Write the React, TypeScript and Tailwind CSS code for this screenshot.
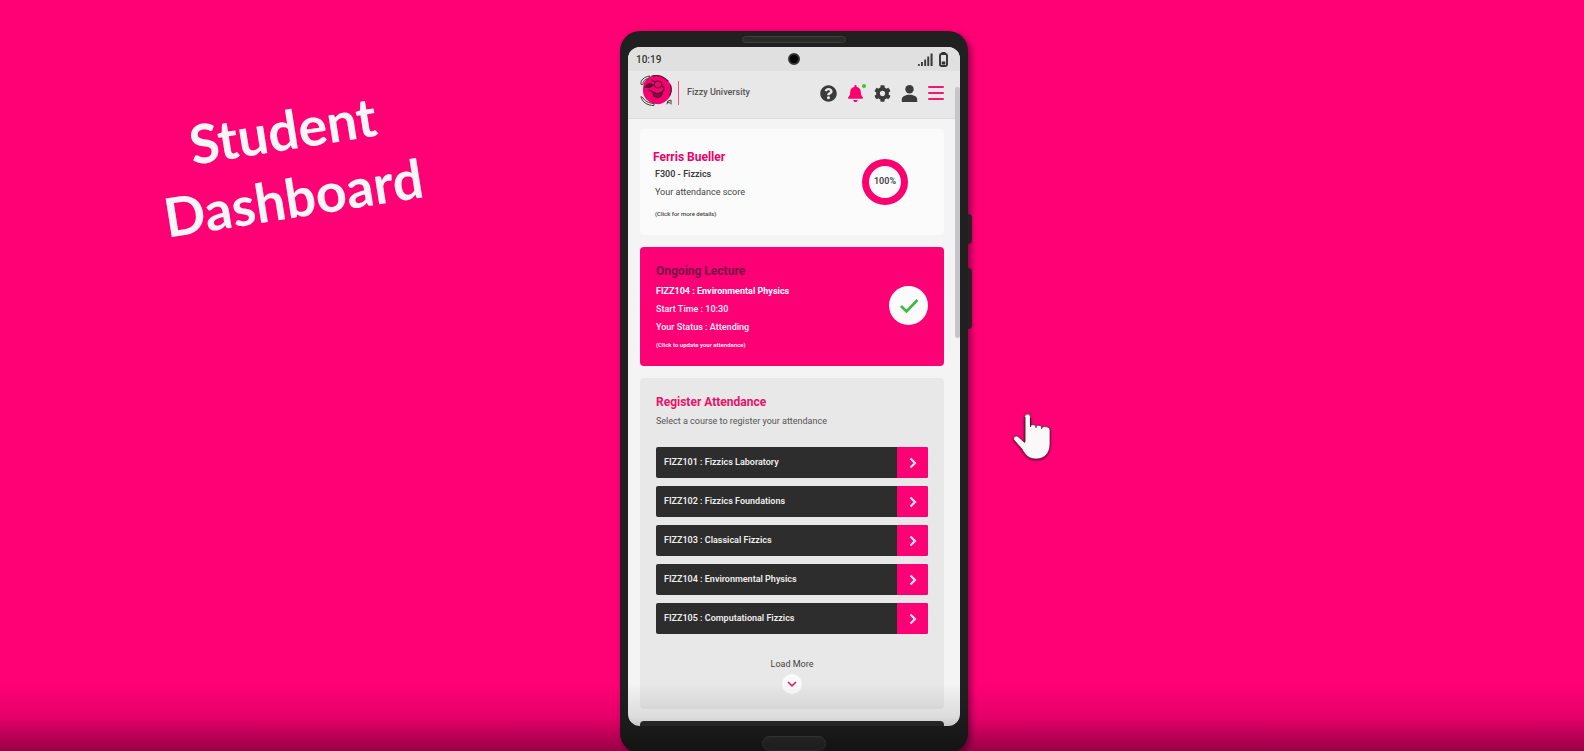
import React from "react";
import { FaBell, FaCog, FaQuestionCircle } from "react-icons/fa";

const courses = [
  "FIZZ101 : Fizzics Laboratory",
  "FIZZ102 : Fizzics Foundations",
  "FIZZ103 : Classical Fizzics",
  "FIZZ104 : Environmental Physics",
  "FIZZ105 : Computational Fizzics",
];

function Logo() {
  return (
    <svg viewBox="0 0 32 32" className="h-8 w-8" fill="none" aria-label="Fizzy University">
      <path d="M8 3C14-1 22 0 27 5c5 4 5 9 4 14-2 6-8 11-15 10C8 28 3 22 3 16 3 10 4 6 8 3Z" fill="#f5006f" />
      <g stroke="#5a1034" strokeWidth="1.200" strokeLinecap="round">
        <path d="M12 1c6-1.500 12 1 16 5M30.500 10c1 3 1 7-.500 10" />
        <ellipse cx="18" cy="9.500" rx="3.800" ry="3.300" />
        <path d="M5 12c2-3 5-4 8-2l-3 2.500Z" fill="#5a1034" />
        <path d="M13 17c3 2 7 2 10-1-1 5-3 7-7 6-2 0-3-2-3-5Z" fill="#8c0a48" />
        <path d="M22.500 11c1 1 2 3 1 5M9 15l4 2M12 5l3 2" />
      </g>
      <g stroke="#3c3c3c" strokeWidth="1" strokeLinecap="round" strokeLinejoin="round">
        <path d="M1 9C0 5 4 2 10 1L8.500 3.500C5 4 3 6 3 9Z" fill="#e8e8e9" />
        <path d="M1 22c1 5 6 8.500 13 8.500l0-2C8 28 5 26 3 23Z" fill="#e8e8e9" />
        <path d="M27 29l1-3 3-1v4M27.500 27l2.500 1" />
      </g>
    </svg>
  );
}

function StatusBar() {
  return (
    <div className="relative flex h-6 items-center justify-between bg-[#e0e0e1] pr-3 pl-2">
      <span className="text-[10px] font-medium text-[#333]">10:19</span>
      <span className="absolute top-1.5 left-1/2 h-3 w-3 -translate-x-1/2 rounded-full border-2 border-[#333] bg-black" />
      <div className="flex items-center gap-1.5">
        <svg viewBox="0 0 15 13" className="h-[13px] w-[15px]" fill="#3a3a3a" aria-hidden="true">
          <rect x="0" y="11" width="1.700" height="2" />
          <rect x="3" y="9" width="1.900" height="4" />
          <rect x="6.200" y="6.500" width="1.900" height="6.500" />
          <rect x="9.300" y="3.500" width="1.900" height="9.500" />
          <rect x="12.500" y="0.500" width="2.100" height="12.500" />
        </svg>
        <svg viewBox="0 0 9 15" className="h-[15px] w-[9px]" fill="none" aria-hidden="true">
          <rect x="1" y="2" width="7" height="12" rx="1.500" stroke="#333" strokeWidth="1.900" />
          <rect x="2.500" y="0" width="4" height="2" fill="#333" />
          <rect x="2.700" y="9.500" width="3.600" height="3" fill="#333" />
        </svg>
      </div>
    </div>
  );
}

function Header() {
  return (
    <header className="flex h-12 items-start justify-between border-b border-[#dcdcdc] bg-[#e8e8e9] pt-1 pr-4 pl-3">
      <div className="flex items-start">
        <Logo />
        <div className="flex h-9 items-center">
          <span className="ml-1.5 h-6 w-px bg-[#f0528f]" />
          <span className="ml-2 text-[9px] font-medium text-[#555]">Fizzy University</span>
        </div>
      </div>
      <nav className="flex h-9 items-center gap-[10px] text-[#3b3b3b]">
        <button aria-label="Help"><FaQuestionCircle size={17} /></button>
        <button aria-label="Notifications" className="relative text-[#fc0070]">
          <FaBell size={17} />
          <span className="absolute -top-px -right-0.5 h-1 w-1 rounded-full bg-[#35c435]" />
        </button>
        <button aria-label="Settings"><FaCog size={17} /></button>
        <button aria-label="Profile">
          <svg viewBox="0 0 17 17" className="h-[17px] w-[17px]" fill="currentColor" aria-hidden="true">
            <circle cx="8.500" cy="4.300" r="4.200" />
            <path d="M0.800 17v-2.500c0-3.200 4-4.700 7.700-4.700s7.700 1.500 7.700 4.700V17Z" />
          </svg>
        </button>
        <button aria-label="Menu" className="flex w-4 flex-col gap-1">
          <span className="h-0.5 rounded-full bg-[#f21871]" />
          <span className="h-0.5 rounded-full bg-[#f21871]" />
          <span className="h-0.5 rounded-full bg-[#f21871]" />
        </button>
      </nav>
    </header>
  );
}

function ScoreCard() {
  return (
    <section className="flex items-start justify-between rounded-sm bg-[#fbfbfb] pt-5 pr-9 pb-3 pl-[13px]">
      <div className="text-[9px] leading-[18px] text-[#444]">
        <h2 className="text-[12px] leading-4 font-bold text-[#ec0069]">Ferris Bueller</h2>
        <div className="pl-0.5">
          <p className="font-semibold text-[#3c3c3c]">F300 - Fizzics</p>
          <p>Your attendance score</p>
          <p className="mt-1 text-[6px] font-medium">(Click for more details)</p>
        </div>
      </div>
      <div className="mt-2.5 flex h-[46px] w-[46px] items-center justify-center rounded-full border-[7px] border-[#fc0070] text-[9px] font-semibold text-[#444]">
        100%
      </div>
    </section>
  );
}

function LectureCard() {
  return (
    <section className="flex items-start justify-between rounded-sm bg-[#fe0075] px-4 pt-[15px] pb-3">
      <div className="text-[9px] leading-[18px] font-semibold text-[#ffe6f1]">
        <h2 className="mb-0.5 text-[12px] font-bold text-[#721545]">Ongoing Lecture</h2>
        <p className="font-bold text-white">FIZZ104 : Environmental Physics</p>
        <p>Start Time : 10:30</p>
        <p>Your Status : Attending</p>
        <p className="text-[6px] font-bold">(Click to update your attendance)</p>
      </div>
      <button aria-label="Attending" className="mt-6 flex h-[39px] w-[39px] items-center justify-center rounded-full bg-[#fbfbfb]">
        <svg viewBox="0 0 20 16" className="h-4 w-5" fill="none" stroke="#3cba3c" strokeWidth="2.600" aria-hidden="true">
          <path d="M2 8l5.500 5.500L18.500 2" />
        </svg>
      </button>
    </section>
  );
}

function RegisterCard() {
  return (
    <section className="rounded-sm bg-[#e8e8e8] px-4 py-[15px]">
      <h2 className="text-[12px] leading-[18px] font-bold text-[#ec1068]">Register Attendance</h2>
      <p className="text-[9px] leading-5 text-[#555]">Select a course to register your attendance</p>
      <ul className="mt-4 flex flex-col gap-2">
        {courses.map((course) => (
          <li key={course}>
            <button className="flex h-[31px] w-full items-stretch overflow-hidden rounded-xs bg-[#2d2d2e] text-left">
              <span className="flex-1 self-center pl-2 text-[9px] font-semibold text-[#ededed]">{course}</span>
              <span className="flex w-[31px] items-center justify-center bg-[#fe0075]">
                <svg viewBox="0 0 8 12" className="h-3 w-2" fill="none" stroke="#ffe3ef" strokeWidth="2.200" aria-hidden="true">
                  <path d="M1.500 1.500L6 6l-4.500 4.500" />
                </svg>
              </span>
            </button>
          </li>
        ))}
      </ul>
      <button className="mx-auto mt-5 flex flex-col items-center text-[9px] leading-5 text-[#444]">
        Load More
        <span className="flex h-5 w-5 items-center justify-center rounded-full bg-[#fafafa]">
          <svg viewBox="0 0 10 6" className="h-1.5 w-[10px]" fill="none" stroke="#e01a64" strokeWidth="1.600" aria-hidden="true">
            <path d="M1 1l4 3.800L9 1" />
          </svg>
        </span>
      </button>
    </section>
  );
}

function Phone() {
  return (
    <div className="relative h-[722px] rounded-[20px] bg-[#1f201f] px-2 pt-[5px] shadow-[3px_3px_6px_rgba(60,0,30,0.55)]">
      <span className="absolute top-[183px] -right-1 h-[30px] w-1 rounded-r-sm bg-[#2a2025]" />
      <span className="absolute top-[237px] -right-1 h-[61px] w-1 rounded-r-sm bg-[#2a2025]" />
      <div className="mx-auto h-[7px] w-[104px] rounded-full border border-[#3d3d3c] bg-[#2b2b2a]" />
      <div className="relative mt-1 h-[679px] overflow-hidden rounded-xl bg-[#f4f4f4]">
        <StatusBar />
        <Header />
        <main className="flex flex-col gap-3 pt-[10px] pr-4 pl-3">
          <ScoreCard />
          <LectureCard />
          <RegisterCard />
          <section className="h-8 rounded-sm bg-[#2d2d2e]" />
        </main>
        <span className="absolute top-10 right-0 h-[251px] w-[5px] rounded-full bg-[#c6c6c8]" />
      </div>
      <div className="mx-auto mt-2.5 h-[15px] w-16 rounded-full border border-[#444] bg-[#303030]" />
    </div>
  );
}

export default function App() {
  return (
    <div className="relative grid h-screen grid-cols-[1fr_348px_1fr] overflow-hidden bg-[#ff0075] pt-[31px] pl-1 font-['Roboto',sans-serif]">
      <h1 className="mt-[65px] mr-12 -rotate-9 self-start text-center font-['Lato',sans-serif] text-[54px] leading-[68px] font-bold text-[#f6f6f6]">
        Student
        <br />
        Dashboard
      </h1>
      <Phone />
      <div className="relative">
        <svg viewBox="0 0 40 48" className="absolute top-[382px] left-[45px] h-12 w-10 drop-shadow-[0_1px_1px_rgba(60,0,30,0.7)]" aria-hidden="true">
          <path
            d="M14.500 1C16.500 1 17.500 2.500 17.500 4.500V13c.3-1.800 5.200-2 5.500.8.800-2.200 5.500-2 5.800.9.900-1.700 5.200-1.400 7 0 1 .8 1.200 1.800 1.200 3.300V31c0 9-5.500 15-14 15-7 0-11-4-14-10L1 27c-1.500-2.500 1.500-5 4-3.500l6.500 6V4.500C11.500 2.500 12.500 1 14.500 1Z"
            fill="#fbf8fa"
            stroke="#55183a"
            strokeWidth="0.700"
          />
          <path d="M12 4v25M17.500 5v9M23 13.500V15M28.700 14.500V16" stroke="#35101f" strokeWidth="0.900" />
        </svg>
      </div>
      <div className="pointer-events-none absolute inset-x-0 bottom-0 h-[68px] bg-linear-to-b from-black/0 via-black/10 to-black/40" />
    </div>
  );
}
